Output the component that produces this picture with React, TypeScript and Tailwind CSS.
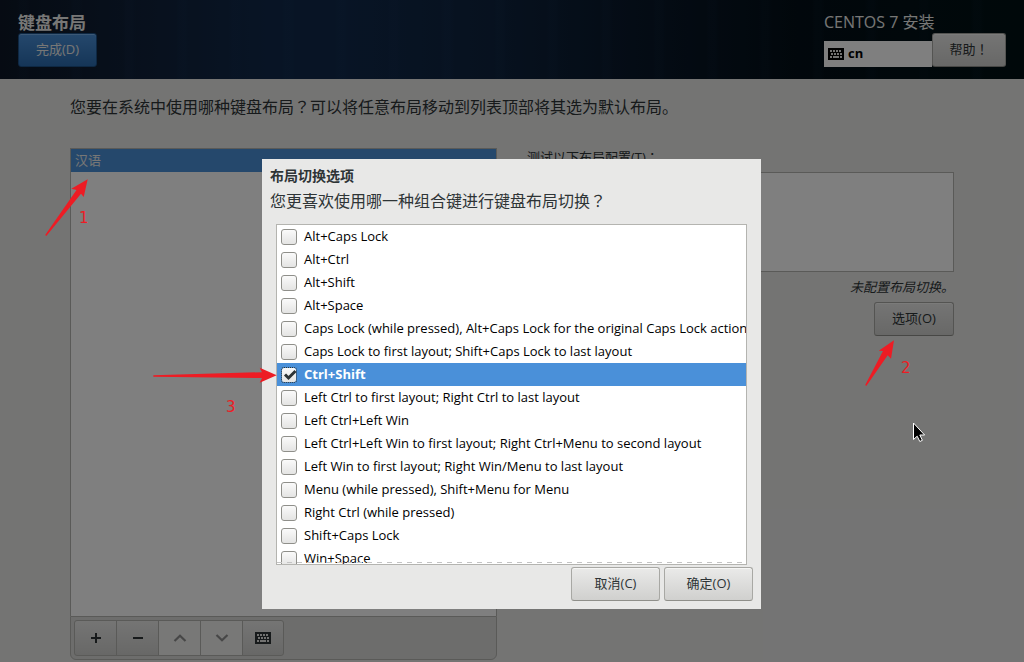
import { useState } from "react"
import type { ButtonHTMLAttributes } from "react"
import { clsx } from "clsx"

// All toggle combinations offered by the installer
const switchOptions: string[] = [
  "Alt+Caps Lock",
  "Alt+Ctrl",
  "Alt+Shift",
  "Alt+Space",
  "Caps Lock (while pressed), Alt+Caps Lock for the original Caps Lock action",
  "Caps Lock to first layout; Shift+Caps Lock to last layout",
  "Ctrl+Shift",
  "Left Ctrl to first layout; Right Ctrl to last layout",
  "Left Ctrl+Left Win",
  "Left Ctrl+Left Win to first layout; Right Ctrl+Menu to second layout",
  "Left Win to first layout; Right Win/Menu to last layout",
  "Menu (while pressed), Shift+Menu for Menu",
  "Right Ctrl (while pressed)",
  "Shift+Caps Lock",
  "Win+Space",
]

function Button({ className, ...props }: ButtonHTMLAttributes<HTMLButtonElement>) {
  return (
    <button
      type="button"
      className={clsx(
        "h-[34px] rounded-[3px] border border-[#a8a8a4] border-b-[#8f8f8a] bg-linear-to-b from-[#eaeae9] to-[#d0d0ce] text-[13px] text-[#2e3436] shadow-[inset_0_1px_0_#f6f6f5]",
        className,
      )}
      {...props}
    />
  )
}

// Full-width punctuation centred in its cell
function Mark({ children }: { children: string }) {
  return <span className="font-['Noto_Sans_CJK_TC',sans-serif] leading-none">{children}</span>
}

function KeyboardIcon({ className }: { className?: string }) {
  return (
    <svg viewBox="0 0 16 12" className={clsx("h-3 w-4", className)} shapeRendering="crispEdges" aria-hidden="true">
      <rect width="16" height="12" rx="1" fill="currentColor" />
      <path
        fill="#e4e4e2"
        d="M2 2h2v2H2zM5 2h2v2H5zM8 2h2v2H8zM11 2h2v2h-2zM3 5h2v2H3zM6 5h2v2H6zM9 5h2v2H9zM12 5h2v2h-2zM2 8h2v2H2zM5 8h6v2H5zM12 8h2v2h-2z"
      />
    </svg>
  )
}

function Header() {
  return (
    <header className="flex h-[79px] items-start justify-between bg-[repeating-linear-gradient(90deg,transparent_0_17px,rgba(60,110,180,0.03)_20px_26px,transparent_30px_53px),linear-gradient(90deg,#0c1726_0%,#10213a_14%,#10294a_26%,#10294a_34%,#0e233e_48%,#09182a_62%,#030f18_78%,#011114_100%)] px-[18px] pt-3">
      <div className="flex flex-col">
        <h1 className="h-[21px] text-[17px] leading-[21px] font-bold text-[#eeeeec]">键盘布局</h1>
        <button
          type="button"
          className="h-[34px] w-[79px] rounded-[3px] border border-[#1c5187] bg-linear-to-b from-[#4a90d9] to-[#2b6cb0] text-[13px] text-[#eeeeec] shadow-[inset_0_1px_0_#76b0ec]"
        >
          完成(D)
        </button>
      </div>
      <div className="flex flex-col">
        <p className="h-[21px] text-base leading-[21px] text-[#eeeeec]">CENTOS 7 安装</p>
        <div className="flex items-end">
          <div className="flex h-[26px] w-[108px] items-center gap-1 bg-white px-1 text-[13px] font-bold text-black">
            <KeyboardIcon />
            <span>cn</span>
          </div>
          <Button className="w-[74px]">
            帮助<Mark>！</Mark>
          </Button>
        </div>
      </div>
    </header>
  )
}

function LayoutToolbar() {
  const tool = "flex h-[34px] w-[42px] items-center justify-center border-r border-[#b4b4b0]"

  return (
    <div className="rounded-b-md border border-[#b4b4b0] bg-[#dadad8] p-[3px]">
      <div className="flex w-fit overflow-hidden rounded-[3px] border border-[#b4b4b0] bg-linear-to-b from-[#eaeae9] to-[#d0d0ce] text-[#2e3436]">
        <button type="button" aria-label="添加" className={tool}>
          <svg viewBox="0 0 10 10" className="size-[10px]" shapeRendering="crispEdges">
            <path d="M0 4h4V0h2v4h4v2H6v4H4V6H0z" fill="currentColor" />
          </svg>
        </button>
        <button type="button" aria-label="删除" className={tool}>
          <svg viewBox="0 0 10 10" className="size-[10px]" shapeRendering="crispEdges">
            <path d="M0 4h10v2H0z" fill="currentColor" />
          </svg>
        </button>
        <button type="button" aria-label="上移" disabled className={clsx(tool, "bg-[#f0f0ef] text-[#8e8e8e]")}>
          <svg viewBox="0 0 14 8" className="h-2 w-[14px]">
            <path d="M1.5 7 7 1.7 12.5 7" fill="none" stroke="currentColor" strokeWidth="2.2" />
          </svg>
        </button>
        <button type="button" aria-label="下移" disabled className={clsx(tool, "bg-[#f0f0ef] text-[#8e8e8e]")}>
          <svg viewBox="0 0 14 8" className="h-2 w-[14px]">
            <path d="M1.5 1 7 6.3 12.5 1" fill="none" stroke="currentColor" strokeWidth="2.2" />
          </svg>
        </button>
        <button type="button" aria-label="预览布局" className="flex h-[34px] w-10 items-center justify-center">
          <KeyboardIcon />
        </button>
      </div>
    </div>
  )
}

function SwitchDialog() {
  const [checked, setChecked] = useState<string[]>(["Ctrl+Shift"])

  const toggle = (name: string) => {
    setChecked((prev) => (prev.includes(name) ? prev.filter((n) => n !== name) : [...prev, name]))
  }

  return (
    <div role="dialog" aria-modal="true" aria-labelledby="switch-title" className="h-fit w-[499px] bg-[#e8e8e7] p-2 text-[#2e3436]">
      <h2 id="switch-title" className="text-sm leading-[18px] font-bold">
        布局切换选项
      </h2>
      <p className="mt-1 text-base leading-6">
        您更喜欢使用哪一种组合键进行键盘布局切换<Mark>？</Mark>
      </p>
      <div className="relative mx-1.5 mt-[11px] h-[341px] overflow-hidden border border-[#b4b4b0] bg-white">
        {switchOptions.map((name) => {
          const isChecked = checked.includes(name)
          return (
            <label
              key={name}
              className={clsx(
                "flex h-[23px] items-center gap-[7px] pl-1 text-[13px] whitespace-nowrap",
                isChecked ? "bg-[#4a90d9] font-bold text-white" : "text-black",
              )}
            >
              <span className="grid size-4 shrink-0 place-items-center">
                <input
                  type="checkbox"
                  checked={isChecked}
                  onChange={() => toggle(name)}
                  className="col-start-1 row-start-1 size-4 appearance-none rounded-[3px] border border-[#8f8f8a] bg-linear-to-b from-[#fafafa] to-[#e4e4e3] bg-clip-padding checked:border-dotted checked:border-[#2e3436]"
                />
                {isChecked && (
                  <svg viewBox="0 0 16 16" className="pointer-events-none col-start-1 row-start-1 size-4 overflow-visible">
                    <path d="M4 7.5 7.5 11 14.5 4" fill="none" stroke="#2e3436" strokeWidth="3" />
                  </svg>
                )}
              </span>
              {name}
            </label>
          )
        })}
        <div className="absolute inset-x-0 bottom-[1px] h-px bg-[repeating-linear-gradient(90deg,#c4c4c4_0_5px,transparent_5px_10px)]" />
      </div>
      <div className="mt-0.5 flex justify-end gap-1">
        <Button className="w-[89px]">取消(C)</Button>
        <Button className="w-[89px]">确定(O)</Button>
      </div>
    </div>
  )
}

// Red arrows and step numbers drawn over the window
function Annotations() {
  return (
    <svg className="pointer-events-none absolute inset-0 size-full" fill="#ed1c24">
      <path d="M87.7 179.3 71.3 188.7 76.5 190 45.2 235 46.3 236 81 193.7 83.7 197z" />
      <path d="M894 340.3 878.7 350.7 883 351 865.2 385 866.3 386 887.7 355.3 891 358.7z" />
      <path d="M276.7 375.3 259.7 367.7 262 372.2 153.3 375.3V376.7L262 378 259.7 382.7z" />
      <g className="font-['DejaVu_Sans',sans-serif] text-[15px]">
        <text x="79" y="223">1</text>
        <text x="901" y="373">2</text>
        <text x="226" y="412">3</text>
      </g>
      <path
        d="M913.5 423v16.5l3.7-3.3 2.6 5.3 2.6-1.2-2.6-5.3h4.8z"
        fill="#000"
        stroke="#fff"
        strokeWidth="1"
      />
    </svg>
  )
}

export default function App() {
  return (
    <div className="relative flex min-h-screen flex-col bg-[#e8e8e7] font-['Open_Sans','Noto_Sans_CJK_SC',sans-serif] text-[#2e3436]">
      <Header />
      <main className="flex flex-1 flex-col px-[70px] pt-4 pb-0.5">
        <p className="text-base leading-6">
          您要在系统中使用哪种键盘布局<Mark>？</Mark>可以将任意布局移动到列表顶部将其选为默认布局。
        </p>
        <div className="mt-[29px] grid flex-1 grid-cols-2 gap-[30px]">
          <section className="flex flex-col">
            <ul className="flex-1 border border-b-0 border-[#b4b4b0] bg-white">
              <li className="h-[23px] bg-[#4a90d9] px-1 text-[13px] leading-[22px] text-[#eeeeec]">汉语</li>
            </ul>
            <LayoutToolbar />
          </section>
          <section className="flex flex-col">
            <label htmlFor="layout-test" className="h-6 text-[13px] leading-[18px]">
              测试以下布局配置(T)<Mark>：</Mark>
            </label>
            <textarea id="layout-test" className="h-[100px] resize-none border border-[#b4b4b0] bg-white" />
            <p className="mt-1 text-right text-[13px] leading-[22px] italic">未配置布局切换。</p>
            <Button className="mt-1 w-20 self-end">选项(O)</Button>
          </section>
        </div>
      </main>
      <div className="absolute inset-0 flex justify-center overflow-hidden bg-black/50 pt-[159px] pr-px">
        <SwitchDialog />
      </div>
      <Annotations />
    </div>
  )
}
